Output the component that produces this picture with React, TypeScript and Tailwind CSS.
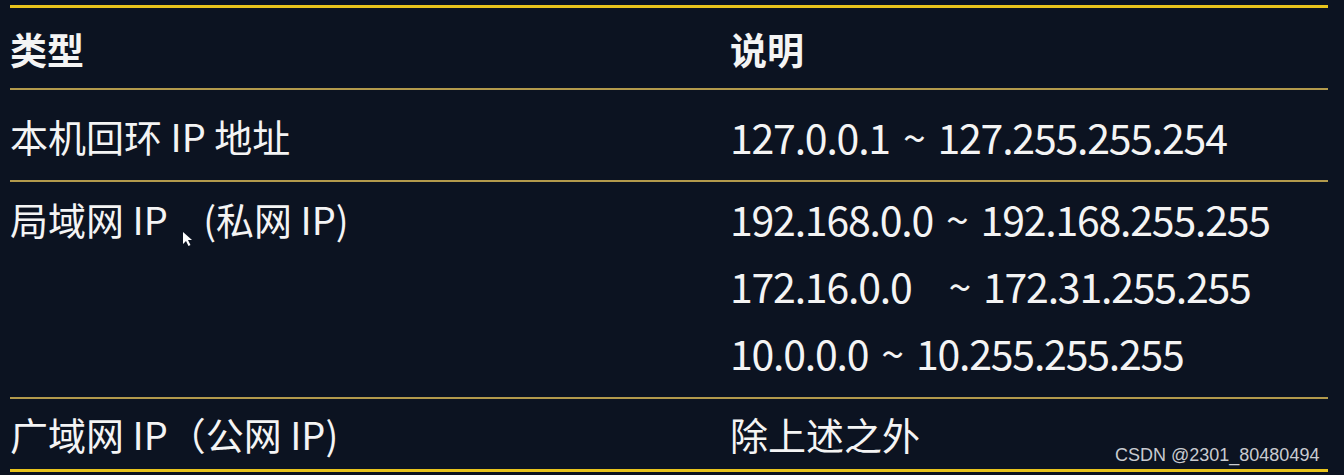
import React from "react";

const cjk = { fontFamily: '"Noto Sans CJK SC", "Noto Sans", sans-serif' };

function Range({ a, b, gap = "" }: { a: string; b: string; gap?: string }) {
  return (
    <div>
      {a}
      {gap}
      <span className="px-[5px]"> ~ </span>
      {b}
    </div>
  );
}

export default function App() {
  return (
    <div
      className="relative w-[1344px] h-[475px] bg-[#0c1321] text-[#f4f4f4] overflow-hidden"
      style={cjk}
    >
      <div className="pt-[5px] pl-[10px] w-[1328px]">
        <div className="h-[3px] bg-[#e8c31c]" />
        {/* header */}
        <div className="flex h-[80px] items-center font-bold text-[37px] leading-none">
          <div className="w-[720px] pt-[2px]">类型</div>
          <div className="flex-1 pt-[2px]">说明</div>
        </div>
        <div className="h-[2px] bg-[#b39a4c]" />
        {/* row1 */}
        <div className="flex h-[90px] items-center leading-none whitespace-nowrap">
          <div className="w-[720px] text-[38px] pt-[2px]">本机回环 IP 地址</div>
          <div className="flex-1 text-[41px] tracking-[-1.2px] pt-[2px]">
            <Range a="127.0.0.1" b="127.255.255.254" />
          </div>
        </div>
        <div className="h-[2px] bg-[#b39a4c]" />
        {/* row2 */}
        <div className="relative flex h-[215px] pt-[3px] leading-[67px] whitespace-nowrap">
          <div className="w-[720px] text-[38px]">
            局域网 IP <span className="ml-[27px]">(私网 IP)</span>
          </div>
          <div className="flex-1 text-[41px] tracking-[-1.2px]">
            <Range a="192.168.0.0" b="192.168.255.255" />
            <Range a="172.16.0.0" gap={"\u00a0\u00a0\u00a0"} b="172.31.255.255" />
            <Range a="10.0.0.0" b="10.255.255.255" />
          </div>
          <svg
            className="absolute left-[172px] top-[49px]"
            width="12"
            height="16"
            viewBox="0 0 12 16"
          >
            <path d="M1 1 L1 13 L4 10 L6.5 15 L8.5 14 L6 9 L10 9 Z" fill="#ffffff" />
          </svg>
        </div>
        <div className="h-[2px] bg-[#b39a4c]" />
        {/* row3 */}
        <div className="flex h-[70px] items-center leading-none text-[38px] whitespace-nowrap">
          <div className="w-[720px]">广域网 IP（公网 IP)</div>
          <div className="flex-1">除上述之外</div>
        </div>
        <div className="h-[3px] bg-[#e8c31c]" />
      </div>
      <div
        className="absolute left-[1115px] top-[444px] text-[18px] leading-[22px] text-[#c9cbd0]"
        style={{ fontFamily: '"Liberation Sans", Arial, sans-serif' }}
      >
        CSDN @2301_80480494
      </div>
    </div>
  );
}
